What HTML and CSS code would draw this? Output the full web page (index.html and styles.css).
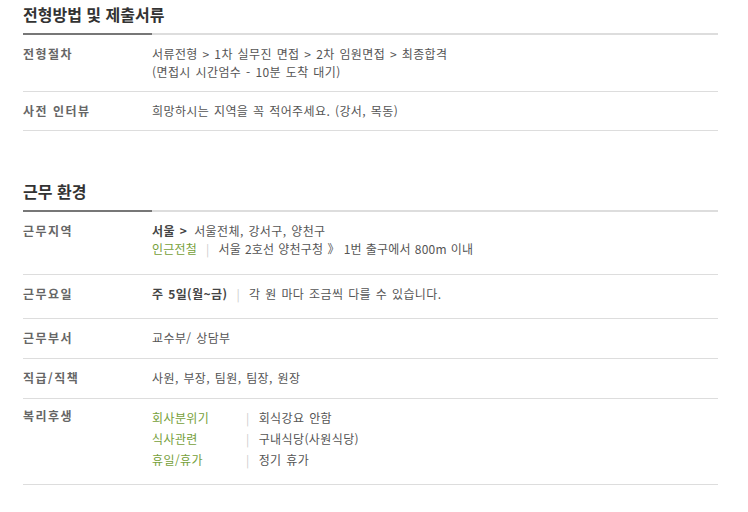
FILE: index.html
```html
<!DOCTYPE html>
<html lang="ko">
<head>
<meta charset="utf-8">
<link rel="stylesheet" href="styles.css">
</head>
<body>
<div class="page">
  <section class="sec">
    <h2 class="sec-title">전형방법 및 제출서류</h2>
    <div class="bar"><span class="bar-dark"></span><span class="bar-light"></span></div>
    <div class="row">
      <div class="label">전형절차</div>
      <div class="value">서류전형 &gt; 1차 실무진 면접 &gt; 2차 임원면접 &gt; 최종합격<br>(면접시 시간엄수 - 10분 도착 대기)</div>
    </div>
    <div class="row">
      <div class="label">사전 인터뷰</div>
      <div class="value">희망하시는 지역을 꼭 적어주세요. (강서, 목동)</div>
    </div>
  </section>

  <section class="sec sec-2">
    <h2 class="sec-title">근무 환경</h2>
    <div class="bar"><span class="bar-dark"></span><span class="bar-light"></span></div>
    <div class="row row-area">
      <div class="label">근무지역</div>
      <div class="value">
        <div><b class="strong">서울 &gt;</b><span class="gap"></span>서울전체, 강서구, 양천구</div>
        <div class="tight"><span class="green">인근전철</span><span class="pipe">|</span>서울 2호선 양천구청 》 1번 출구에서 800m 이내</div>
      </div>
    </div>
    <div class="row row-days">
      <div class="label">근무요일</div>
      <div class="value"><b class="strong">주 5일(월~금)</b><span class="pipe">|</span>각 원 마다 조금씩 다를 수 있습니다.</div>
    </div>
    <div class="row">
      <div class="label">근무부서</div>
      <div class="value">교수부/ 상담부</div>
    </div>
    <div class="row">
      <div class="label">직급/직책</div>
      <div class="value">사원, 부장, 팀원, 팀장, 원장</div>
    </div>
    <div class="row row-welfare">
      <div class="label">복리후생</div>
      <div class="value welfare">
        <div class="wl"><span class="green wk">회사분위기</span><span class="pipe">|</span>회식강요 안함</div>
        <div class="wl"><span class="green wk">식사관련</span><span class="pipe">|</span>구내식당(사원식당)</div>
        <div class="wl"><span class="green wk">휴일/휴가</span><span class="pipe">|</span>정기 휴가</div>
      </div>
    </div>
  </section>
</div>
</body>
</html>
```

FILE: styles.css
```css
* { box-sizing: border-box; }
html, body { margin: 0; padding: 0; background: #fff; }
body {
  font-family: "Noto Sans CJK KR", "Noto Sans", sans-serif;
  font-size: 12px;
  color: #555;
}
.page {
  width: 718px;
  padding-left: 23px;
}
.sec-title {
  margin: 0;
  padding: 3px 0 8px;
  font-size: 16px;
  line-height: 22px;
  font-weight: bold;
  color: #333;
}
.sec-2 { margin-top: 46px; }
.bar { display: flex; height: 2px; }
.bar-dark { width: 129px; background: #777; }
.bar-light { flex: 1; background: #ddd; }
.row {
  display: flex;
  padding: 10px 0 11px;
  border-bottom: 1px solid #ddd;
  line-height: 18px;
}
.sec:first-child .row { padding-bottom: 10px; }
.row-area { padding-bottom: 16px; }
.row-days { padding-bottom: 15px; }
.row-welfare { padding-top: 8px; padding-bottom: 14px; }
.label {
  width: 129px;
  flex: none;
  font-weight: bold;
  color: #666;
  letter-spacing: 1.5px;
}
.value {
  flex: 1;
  letter-spacing: 0.4px;
  word-spacing: 1px;
}
.value .tight { letter-spacing: 0.2px; word-spacing: 0.5px; }
.gap { display: inline-block; width: 7px; }
.strong { font-weight: bold; color: #444; }
.green { color: #76a03a; }
.pipe { color: #ccc; margin: 0 9px; }
.welfare { line-height: 21px; }
.wl { display: flex; }
.wk { width: 94px; }
.wl .pipe { margin: 0 9px 0 0; }
```
